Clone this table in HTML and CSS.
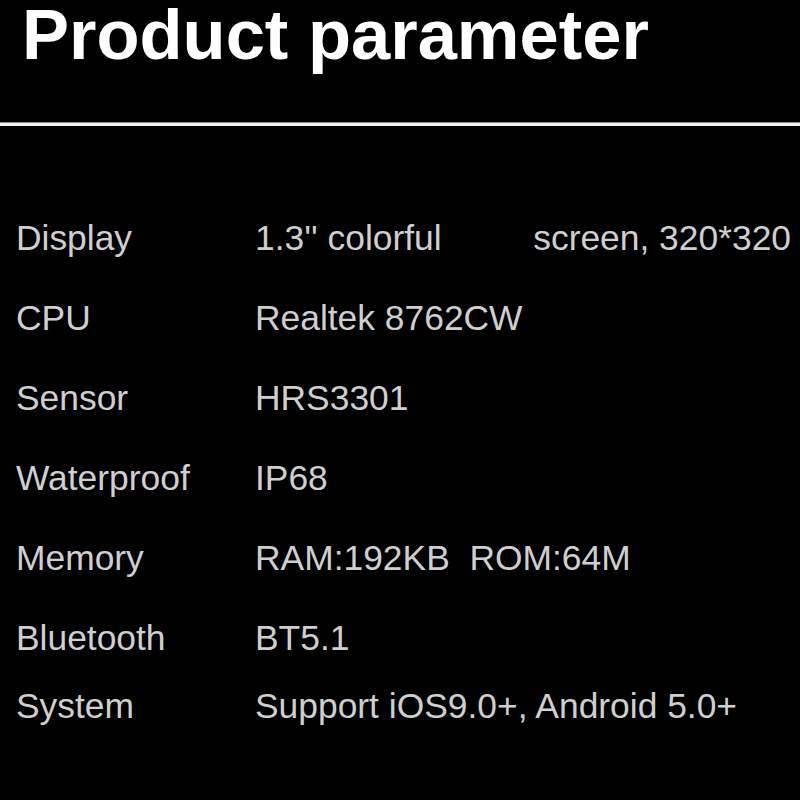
FILE: index.html
```html
<!DOCTYPE html>
<html lang="en">
<head>
  <meta charset="UTF-8">
  <meta name="viewport" content="width=device-width, initial-scale=1.0">
  <title>Product parameter</title>
  <link rel="stylesheet" href="styles.css">
</head>
<body>

  <h1 class="title">Product parameter</h1>
  <div class="rule"></div>

  <div class="params">
    <div class="row">
      <span class="label">Display</span>
      <span class="value split"><span>1.3'' colorful</span><span>screen, 320*320</span></span>
    </div>
    <div class="row">
      <span class="label">CPU</span>
      <span class="value">Realtek 8762CW</span>
    </div>
    <div class="row">
      <span class="label">Sensor</span>
      <span class="value">HRS3301</span>
    </div>
    <div class="row">
      <span class="label">Waterproof</span>
      <span class="value">IP68</span>
    </div>
    <div class="row">
      <span class="label">Memory</span>
      <span class="value">RAM:192KB&nbsp; ROM:64M</span>
    </div>
    <div class="row">
      <span class="label">Bluetooth</span>
      <span class="value">BT5.1</span>
    </div>
    <div class="row last">
      <span class="label">System</span>
      <span class="value">Support iOS9.0+, Android 5.0+</span>
    </div>
  </div>

</body>
</html>
```

FILE: styles.css
```css
body {
  margin: 0;
  padding: 0;
  background-color: #000;
  font-family: "Liberation Sans", Arial, sans-serif;
  height: 800px;
  overflow: hidden;
}
.title {
  margin: 0;
  padding: 2px 0 0 22px;
  font-size: 70.5px;
  line-height: 66px;
  font-weight: bold;
  color: #fff;
}
.rule {
  margin-top: 54px;
  height: 4px;
  background-color: #eeeeee;
  border-top: 1px solid #8a8a8a;
  box-sizing: border-box;
}
.params {
  margin-top: 72px;
  padding: 0 9px 0 16px;
  color: #cfcfcf;
  font-size: 35.4px;
}
.row {
  display: flex;
  line-height: 80px;
}
.row.last {
  line-height: 56px;
}
.label {
  width: 239px;
  flex-shrink: 0;
}
.value {
  flex: 1;
}
.value.split {
  display: flex;
  justify-content: space-between;
}
```
